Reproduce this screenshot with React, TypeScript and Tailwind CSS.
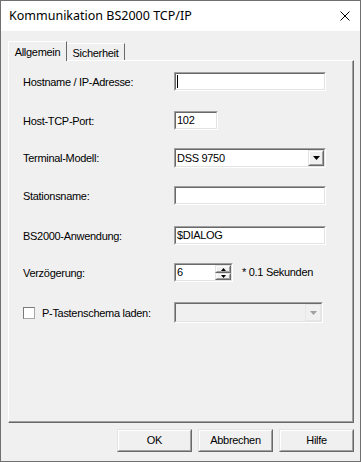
import React from 'react';

const Sunken: React.FC<{ className?: string; inner?: string; children?: React.ReactNode }> = ({ className = '', inner = 'bg-white', children }) => (
  <div className={`border border-t-[#a0a0a0] border-l-[#a0a0a0] border-r-white border-b-white ${className}`}>
    <div className={`h-full w-full flex items-center border border-t-[#696969] border-l-[#696969] border-r-[#e3e3e3] border-b-[#e3e3e3] ${inner}`}>
      {children}
    </div>
  </div>
);

const Raised: React.FC<{ className?: string; children?: React.ReactNode }> = ({ className = '', children }) => (
  <div className={`border border-t-[#e3e3e3] border-l-[#e3e3e3] border-r-[#696969] border-b-[#696969] bg-[#f0f0f0] ${className}`}>
    <div className="h-full w-full flex items-center justify-center border border-t-white border-l-white border-r-[#a0a0a0] border-b-[#a0a0a0]">
      {children}
    </div>
  </div>
);

const DownArrow = ({ color = '#000' }: { color?: string }) => (
  <svg width="7" height="4" viewBox="0 0 7 4">
    <path d="M0 0h7L3.5 4z" fill={color} />
  </svg>
);

const Row: React.FC<{ label: React.ReactNode; className: string; children: React.ReactNode }> = ({ label, className, children }) => (
  <div className={`flex items-center ${className}`}>
    <div className="w-[151px] shrink-0 pt-px">{label}</div>
    {children}
  </div>
);

const DialogButton = ({ label }: { label: string }) => (
  <Raised className="w-[75px] h-[23px]">
    <span>{label}</span>
  </Raised>
);

export default function App() {
  return (
    <div className="w-[361px] h-[462px] flex flex-col border border-[#707070] bg-[#f0f0f0] text-black font-['Liberation_Sans',Arial,sans-serif] text-[11px] tracking-[-0.3px]">
      {/* title bar */}
      <div className="h-[30px] shrink-0 bg-white flex items-center justify-between pl-[8px] pr-[10px]">
        <span className="font-['Noto_Sans',sans-serif] text-[12.5px] tracking-normal">Kommunikation BS2000 TCP/IP</span>
        <svg width="10" height="10" viewBox="0 0 10 10">
          <path d="M0.5 0.5L9.5 9.5M9.5 0.5L0.5 9.5" stroke="#000" strokeWidth="1" />
        </svg>
      </div>

      {/* tabs */}
      <div className="mt-[10px] ml-[7px] h-[20px] flex items-end">
        <div className="relative z-10 h-[20px] w-[59px] bg-[#f0f0f0] border-t border-l border-r border-t-white border-l-white border-r-[#696969] flex justify-center pt-[2px]">
          Allgemein
        </div>
        <div className="h-[17px] w-[58px] mb-px border-t border-r border-t-white border-r-[#696969] flex justify-center pt-[1px]">
          Sicherheit
        </div>
      </div>

      {/* panel */}
      <div className="-mt-px ml-[7px] mr-[6px] h-[363px] border border-t-white border-l-white border-r-[#696969] border-b-[#696969]">
        <div className="h-full border-r border-b border-r-[#a0a0a0] border-b-[#a0a0a0] pl-[14px] pt-[11px] flex flex-col">
          <Row label="Hostname / IP-Adresse:" className="h-[19px]">
            <Sunken className="w-[152px] h-[19px]">
              <div className="ml-px w-px h-[13px] bg-black" />
            </Sunken>
          </Row>
          <Row label="Host-TCP-Port:" className="h-[19px] mt-[20px]">
            <Sunken className="w-[44px] h-[19px]">
              <span className="pl-px">102</span>
            </Sunken>
          </Row>
          <Row label="Terminal-Modell:" className="h-[20px] mt-[18px]">
            <Sunken className="w-[152px] h-[20px]">
              <span className="pl-px flex-1">DSS 9750</span>
              <Raised className="w-[16px] h-full">
                <DownArrow />
              </Raised>
            </Sunken>
          </Row>
          <Row label="Stationsname:" className="h-[19px] mt-[18px]">
            <Sunken className="w-[152px] h-[19px]" />
          </Row>
          <Row label="BS2000-Anwendung:" className="h-[19px] mt-[21px]">
            <Sunken className="w-[152px] h-[19px]">
              <span className="pl-px">$DIALOG</span>
            </Sunken>
          </Row>
          <Row label="Verzögerung:" className="h-[19px] mt-[18px]">
            <Sunken className="w-[59px] h-[19px]">
              <span className="pl-px flex-1">6</span>
              <div className="w-[16px] h-full flex flex-col">
                <Raised className="h-[8px] w-full">
                  <svg width="5" height="3" viewBox="0 0 5 3">
                    <path d="M2.5 0L5 3H0z" fill="#000" />
                  </svg>
                </Raised>
                <Raised className="h-[7px] w-full">
                  <svg width="5" height="3" viewBox="0 0 5 3">
                    <path d="M0 0h5L2.5 3z" fill="#000" />
                  </svg>
                </Raised>
              </div>
            </Sunken>
            <span className="ml-[9px]">* 0.1 Sekunden</span>
          </Row>
          <Row
            label={
              <div className="flex items-center">
                <div className="w-[12px] h-[12px] bg-white border border-t-[#7a7a7a] border-l-[#7a7a7a] border-r-[#a8a8a8] border-b-[#a8a8a8]" />
                <span className="ml-[7px]">P-Tastenschema laden:</span>
              </div>
            }
            className="h-[21px] mt-[20px]"
          >
            <Sunken className="w-[149px] h-[21px]" inner="bg-[#f0f0f0]">
              <div className="flex-1" />
              <div className="w-[16px] h-full border border-[#e6e6e6] bg-[#f0f0f0] flex items-center justify-center">
                <DownArrow color="#a0a0a0" />
              </div>
            </Sunken>
          </Row>
        </div>
      </div>

      {/* buttons */}
      <div className="mt-[6px] mr-[6px] flex justify-end gap-[6px]">
        <DialogButton label="OK" />
        <DialogButton label="Abbrechen" />
        <DialogButton label="Hilfe" />
      </div>
    </div>
  );
}
